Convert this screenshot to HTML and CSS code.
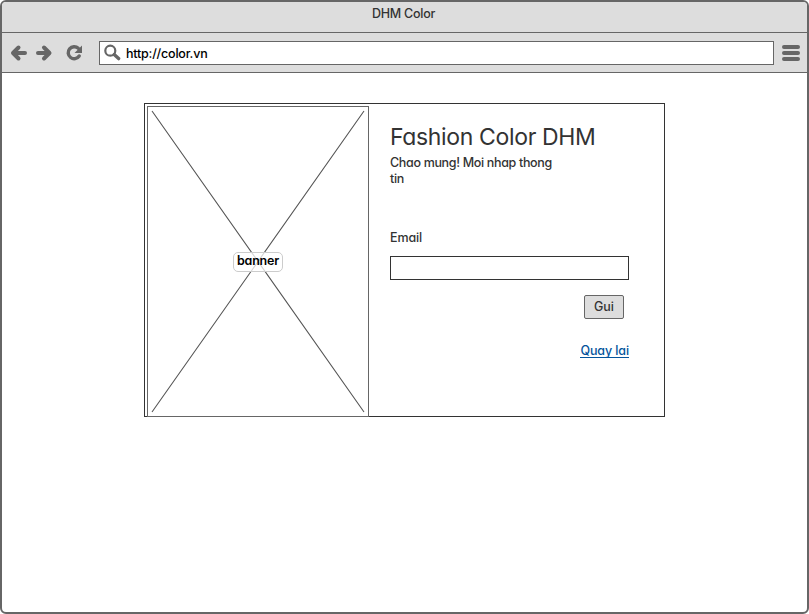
FILE: index.html
```html
<!DOCTYPE html>
<html lang="vi">
<head>
<meta charset="utf-8">
<title>DHM Color</title>
<link rel="stylesheet" href="styles.css">
</head>
<body>
<div class="window">
  <header class="titlebar"><span class="title">DHM Color</span></header>
  <nav class="toolbar">
    <svg class="nav-icons" width="80" height="24" viewBox="0 0 80 24">
      <g fill="none" stroke="#666" stroke-width="4" stroke-linecap="round" stroke-linejoin="round">
        <path d="M11.5 6.5L6 12L11.5 17.5M7 12H18"/>
        <path d="M37 6.5L42.5 12L37 17.5M41.5 12H31"/>
        <path d="M71.3 7.3A6 6 0 1 0 72.2 15" stroke-width="3.4"/>
      </g>
      <path d="M75 4.5V12H67.5Z" fill="#666"/>
    </svg>
    <div class="address">
      <svg width="18" height="18" viewBox="0 0 18 18">
        <circle cx="7.3" cy="6.7" r="5" fill="none" stroke="#666" stroke-width="2.2"/>
        <path d="M11.2 10.6L15.6 14.6" stroke="#666" stroke-width="3.4" stroke-linecap="round"/>
      </svg>
      <span class="url">http://color.vn</span>
    </div>
    <svg class="menu" width="18" height="18" viewBox="0 0 18 18">
      <path d="M2 3H16M2 9H16M2 15H16" stroke="#666" stroke-width="4" stroke-linecap="round"/>
    </svg>
  </nav>
  <main class="page">
    <section class="card">
      <div class="banner">
        <svg class="cross" width="220" height="309" viewBox="0 0 220 309">
          <path d="M4 4L216 305M216 4L4 305" stroke="#555" stroke-width="1.1"/>
        </svg>
        <span class="banner-label">banner</span>
      </div>
      <form class="form">
        <h1 class="heading">Fashion Color DHM</h1>
        <p class="welcome">Chao mung! Moi nhap thong<br>tin</p>
        <label class="label" for="email">Email</label>
        <input class="input" id="email" type="text">
        <button class="button" type="button">Gui</button>
        <a class="link" href="#">Quay lai</a>
      </form>
    </section>
  </main>
</div>
</body>
</html>
```
FILE: styles.css
```css
* { box-sizing: border-box; }
body {
  margin: 0;
  background: #fff;
  color: #333;
  font: 500 12.5px/16px Inter, "Open Sans", sans-serif;
  font-feature-settings: "cv11", "ss03";
}
.window {
  width: 809px;
  height: 614px;
  border: 2px solid #666;
  border-radius: 6px;
  overflow: hidden;
}
.titlebar {
  height: 31px;
  padding-top: 4px;
  background: #ddd;
  border-bottom: 1px solid #666;
  text-align: center;
}
.title { margin-right: 2px; letter-spacing: -.25px; }
.toolbar {
  display: flex;
  align-items: center;
  height: 40px;
  padding: 0 7px 0 5px;
  background: #ddd;
  border-bottom: 1px solid #666;
}
.nav-icons { margin-right: 12px; }
.address {
  display: flex;
  align-items: center;
  flex: 1;
  height: 24px;
  margin-right: 8px;
  padding-left: 3px;
  background: #fff;
  border: 1px solid #666;
}
.nav-icons, .menu { flex: none; }
.url { margin-left: 5px; padding-top: 2px; color: #000; letter-spacing: -.2px; }
.page { padding: 30px 0 0 142px; }
.card {
  display: flex;
  width: 521px;
  height: 314px;
  padding: 2px 0 0 2px;
  border: 1px solid #333;
}
.banner {
  position: relative;
  display: flex;
  flex: none;
  align-items: center;
  justify-content: center;
  width: 222px;
  height: 311px;
  border: 1px solid #666;
}
.cross { position: absolute; left: 0; top: 0; }
.banner-label {
  position: relative;
  width: 50px;
  height: 20px;
  border: 1px solid #ccc;
  border-radius: 5px;
  background: rgba(255, 255, 255, .75);
  color: #000;
  font-weight: 600;
  letter-spacing: -.2px;
  text-align: center;
}
.form {
  display: flex;
  flex-direction: column;
  width: 239px;
  margin-left: 21px;
}
.heading {
  margin: 16px 0 0;
  font-size: 23px;
  font-weight: 400;
  line-height: 30px;
  letter-spacing: -.35px;
  white-space: nowrap;
}
.welcome { margin: 3px 0 0; letter-spacing: -.33px; }
.label { margin-top: 43px; letter-spacing: -.1px; }
.input {
  height: 24px;
  margin-top: 10px;
  border: 1px solid #333;
  background: #fff;
}
.button {
  align-self: flex-end;
  width: 40px;
  height: 24px;
  margin: 15px 5px 0 0;
  padding: 0;
  border: 1px solid #666;
  border-radius: 2px;
  background: #ddd;
  color: #333;
  font: inherit;
  font-feature-settings: inherit;
}
.link {
  align-self: flex-end;
  height: 15px;
  margin-top: 24px;
  border-bottom: 1px solid #04549c;
  color: #04549c;
  line-height: 16px;
  letter-spacing: -.1px;
  text-decoration: none;
}
```
